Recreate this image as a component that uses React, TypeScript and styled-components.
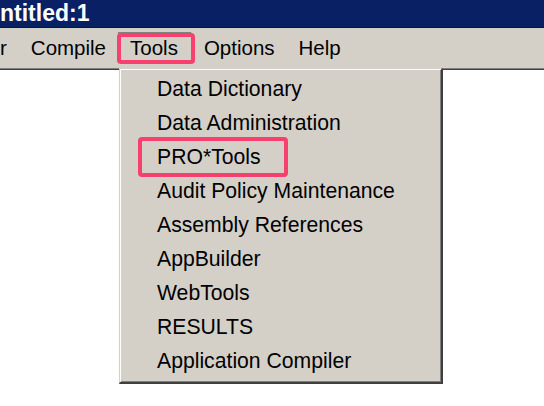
import styled, { createGlobalStyle, css } from 'styled-components';

const GlobalStyle = createGlobalStyle`
  html, body {
    margin: 0;
    padding: 0;
    background: #fff;
    overflow: hidden;
  }
  body {
    font-family: "Liberation Sans", Arial, sans-serif;
  }
`;

const Window = styled.div`
  position: relative;
  width: 544px;
  height: 406px;
  display: flex;
  flex-direction: column;
  background: #fff;
  overflow: hidden;
`;

const TitleBar = styled.div`
  height: 27px;
  background: #0a2064;
  border-bottom: 1px solid #061545;
  color: #fff;
  font-weight: bold;
  font-size: 23px;
  line-height: 27px;
  white-space: nowrap;
`;

const MenuBar = styled.nav`
  height: 40px;
  background: #d4d0c8;
  display: flex;
  align-items: stretch;
  padding-top: 4px;
  box-sizing: border-box;
  margin-left: -12px;
`;

// pink callout frame drawn over a menu entry
const Mark = css`
  &::after {
    content: '';
    position: absolute;
    border: 4px solid #f8406f;
    border-radius: 4px;
    pointer-events: none;
  }
`;

const MenuItem = styled.div<{ $open?: boolean; $marked?: boolean }>`
  position: relative;
  padding: 0 12px;
  height: 32px;
  display: flex;
  align-items: center;
  font-size: 20.5px;
  color: #000;
  box-sizing: border-box;
  ${(p) =>
    p.$open &&
    css`
      border-top: 1px solid #808080;
      border-left: 1px solid #808080;
      border-right: 1px solid #fff;
      border-bottom: 1px solid #fff;
      padding: 0 13px 0 11px;
    `}
  ${(p) =>
    p.$marked &&
    css`
      ${Mark}
      &::after {
        left: -2px;
        right: -4px;
        top: 0;
        bottom: -1px;
      }
    `}
`;

const Client = styled.div`
  flex: 1;
  border-top: 1px solid #808080;
  box-shadow: inset 0 1px 0 #404040;
  background: #fff;
`;

const Dropdown = styled.ul`
  position: absolute;
  left: 119px;
  top: 68px;
  width: 324px;
  height: 316px;
  margin: 0;
  padding: 3px 0 0;
  list-style: none;
  box-sizing: border-box;
  background: #d4d0c8;
  border-top: 1px solid #d4d0c8;
  border-left: 1px solid #d4d0c8;
  border-right: 2px solid #404040;
  border-bottom: 2px solid #404040;
  box-shadow: inset 1px 1px 0 #fff, inset -1px -1px 0 #808080;
`;

const DropItem = styled.li`
  height: 34px;
  display: flex;
  align-items: center;
  padding-left: 37px;
  font-size: 21.2px;
  color: #000;
  white-space: nowrap;
`;

const Label = styled.span<{ $marked?: boolean }>`
  position: relative;
  ${(p) =>
    p.$marked &&
    css`
      ${Mark}
      &::after {
        left: -19px;
        right: -27px;
        top: -8px;
        bottom: -8px;
      }
    `}
`;

const menu = ['r', 'Compile', 'Tools', 'Options', 'Help'];

const tools = [
  'Data Dictionary',
  'Data Administration',
  'PRO*Tools',
  'Audit Policy Maintenance',
  'Assembly References',
  'AppBuilder',
  'WebTools',
  'RESULTS',
  'Application Compiler',
];

export default function App() {
  return (
    <>
      <GlobalStyle />
      <Window>
        <TitleBar>ntitled:1</TitleBar>
        <MenuBar>
          {menu.map((m) => (
            <MenuItem key={m} $open={m === 'Tools'} $marked={m === 'Tools'}>
              {m}
            </MenuItem>
          ))}
        </MenuBar>
        <Client />
        <Dropdown>
          {tools.map((t) => (
            <DropItem key={t}>
              <Label $marked={t === 'PRO*Tools'}>{t}</Label>
            </DropItem>
          ))}
        </Dropdown>
      </Window>
    </>
  );
}
